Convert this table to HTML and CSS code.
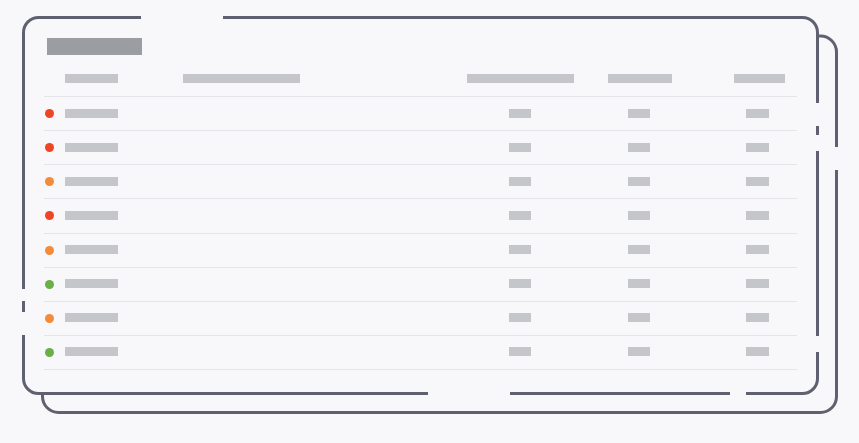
FILE: index.html
```html
<!DOCTYPE html>
<html lang="en">
<head>
<meta charset="utf-8">
<title>Table skeleton</title>
<link rel="stylesheet" href="styles.css">
</head>
<body>
<div class="scene">
  <svg class="frame" width="859" height="443" viewBox="0 0 859 443" aria-hidden="true">
    <g class="stroke">
      <path d="M836.5,147 V52 A16,16 0 0 0 820.5,36 H600"/>
      <path d="M836.5,170 V396.5 A16,16 0 0 1 820.5,412.5 H58.5 A16,16 0 0 1 42.5,396.5 V300"/>
    </g>
    <rect class="fill" x="23.5" y="17.5" width="794" height="376" rx="15" ry="15"/>
    <g class="stroke">
      <path d="M141,17.5 H38.5 A15,15 0 0 0 23.5,32.5 V289"/>
      <path d="M23.5,301 V312"/>
      <path d="M23.5,335 V378.5 A15,15 0 0 0 38.5,393.5 H428"/>
      <path d="M510,393.5 H730"/>
      <path d="M746,393.5 H802.5 A15,15 0 0 0 817.5,378.5 V352"/>
      <path d="M817.5,336 V151"/>
      <path d="M817.5,135 V126"/>
      <path d="M817.5,103 V32.5 A15,15 0 0 0 802.5,17.5 H223"/>
    </g>
  </svg>

  <div class="card">
    <div class="title"></div>
    <div class="table">
      <div class="row head">
        <span class="cell name"><i class="bar w53"></i></span>
        <span class="cell desc"><i class="bar w117"></i></span>
        <span class="cell c3"><i class="bar w107"></i></span>
        <span class="cell c4"><i class="bar w64"></i></span>
        <span class="cell c5"><i class="bar w51"></i></span>
      </div>

      <div class="row">
        <span class="cell dotcell"><i class="dot red"></i></span>
        <span class="cell name"><i class="bar w53"></i></span>
        <span class="cell c3"><i class="bar w22"></i></span>
        <span class="cell c4"><i class="bar w22"></i></span>
        <span class="cell c5"><i class="bar w23"></i></span>
      </div>
      <div class="row">
        <span class="cell dotcell"><i class="dot red"></i></span>
        <span class="cell name"><i class="bar w53"></i></span>
        <span class="cell c3"><i class="bar w22"></i></span>
        <span class="cell c4"><i class="bar w22"></i></span>
        <span class="cell c5"><i class="bar w23"></i></span>
      </div>
      <div class="row">
        <span class="cell dotcell"><i class="dot orange"></i></span>
        <span class="cell name"><i class="bar w53"></i></span>
        <span class="cell c3"><i class="bar w22"></i></span>
        <span class="cell c4"><i class="bar w22"></i></span>
        <span class="cell c5"><i class="bar w23"></i></span>
      </div>
      <div class="row">
        <span class="cell dotcell"><i class="dot red"></i></span>
        <span class="cell name"><i class="bar w53"></i></span>
        <span class="cell c3"><i class="bar w22"></i></span>
        <span class="cell c4"><i class="bar w22"></i></span>
        <span class="cell c5"><i class="bar w23"></i></span>
      </div>
      <div class="row">
        <span class="cell dotcell"><i class="dot orange"></i></span>
        <span class="cell name"><i class="bar w53"></i></span>
        <span class="cell c3"><i class="bar w22"></i></span>
        <span class="cell c4"><i class="bar w22"></i></span>
        <span class="cell c5"><i class="bar w23"></i></span>
      </div>
      <div class="row">
        <span class="cell dotcell"><i class="dot green"></i></span>
        <span class="cell name"><i class="bar w53"></i></span>
        <span class="cell c3"><i class="bar w22"></i></span>
        <span class="cell c4"><i class="bar w22"></i></span>
        <span class="cell c5"><i class="bar w23"></i></span>
      </div>
      <div class="row">
        <span class="cell dotcell"><i class="dot orange"></i></span>
        <span class="cell name"><i class="bar w53"></i></span>
        <span class="cell c3"><i class="bar w22"></i></span>
        <span class="cell c4"><i class="bar w22"></i></span>
        <span class="cell c5"><i class="bar w23"></i></span>
      </div>
      <div class="row">
        <span class="cell dotcell"><i class="dot green"></i></span>
        <span class="cell name"><i class="bar w53"></i></span>
        <span class="cell c3"><i class="bar w22"></i></span>
        <span class="cell c4"><i class="bar w22"></i></span>
        <span class="cell c5"><i class="bar w23"></i></span>
      </div>
    </div>
  </div>
</div>
</body>
</html>
```

FILE: styles.css
```css
* {
  box-sizing: border-box;
}

html, body {
  margin: 0;
  padding: 0;
  background: #f8f8fa;
  font-family: "Liberation Sans", Arial, sans-serif;
}

.scene {
  position: relative;
  width: 859px;
  height: 443px;
  overflow: hidden;
}

.frame {
  position: absolute;
  left: 0;
  top: 0;
}

.frame .stroke path {
  fill: none;
  stroke: #5f6170;
  stroke-width: 3;
  stroke-linecap: butt;
}

.frame .fill {
  fill: #f8f8fa;
}

.card {
  position: relative;
  width: 797px;
  padding: 38px 0 0 44px;
}

.title {
  width: 95px;
  height: 17px;
  margin-left: 3px;
  background: #9c9da2;
}

.table {
  display: flex;
  flex-direction: column;
  margin-top: 7px;
}

.row {
  display: grid;
  grid-template-columns: 21px 118px 284px 107px 34px 64px 62px 51px 12px;
  align-items: center;
  height: 34.125px;
  border-bottom: 1px solid #e5e5e9;
}

.row.head {
  height: 35px;
}

.cell {
  display: flex;
  align-items: center;
  height: 100%;
}

.dotcell {
  grid-column: 1;
  padding-left: 1px;
}

.name {
  grid-column: 2;
}

.desc {
  grid-column: 3;
}

.c3 {
  grid-column: 4;
  justify-content: center;
  padding-right: 1px;
}

.c4 {
  grid-column: 6;
  justify-content: center;
  padding-right: 2px;
}

.c5 {
  grid-column: 8;
  justify-content: center;
  padding-right: 4px;
}

.row.head .c3,
.row.head .c4,
.row.head .c5 {
  padding-right: 0;
}

.bar {
  display: block;
  height: 9px;
  background: #c5c6c9;
  margin-bottom: 1px;
}

.row.head .bar {
  margin-bottom: 2px;
}

.w22 { width: 22px; }
.w23 { width: 23px; }
.w51 { width: 51px; }
.w53 { width: 53px; }
.w64 { width: 64px; }
.w107 { width: 107px; }
.w117 { width: 117px; }

.dot {
  display: block;
  width: 9px;
  height: 9px;
  border-radius: 50%;
}

.red { background: #ee4527; }
.orange { background: #f48b38; }
.green { background: #6aaf47; }
```
